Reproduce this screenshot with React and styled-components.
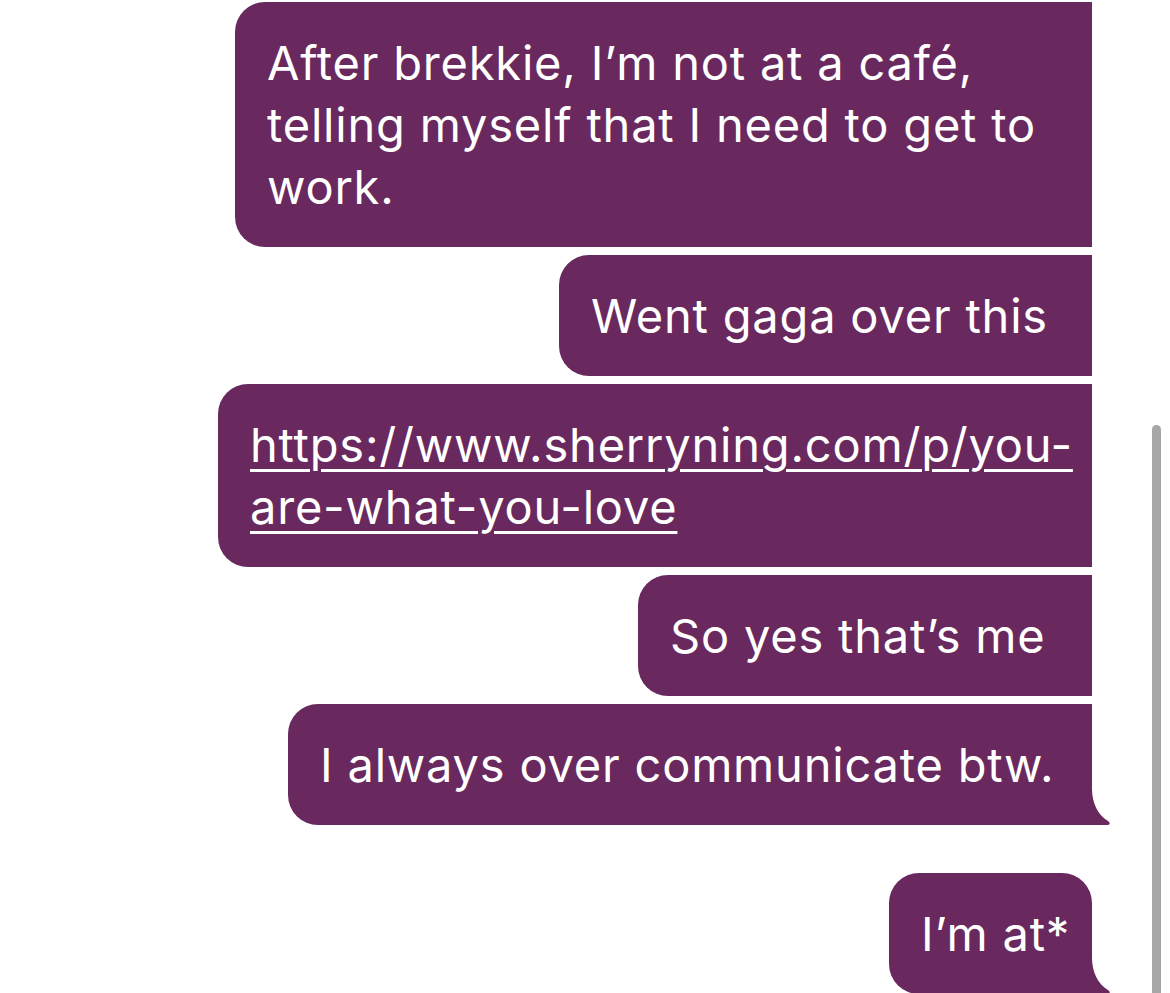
import React from "react";
import styled, { createGlobalStyle } from "styled-components";

const Global = createGlobalStyle`
  html, body { margin: 0; padding: 0; background: #ffffff; overflow: hidden; }
  body { font-family: "Inter", "Lato", "Liberation Sans", sans-serif; }
`;

const Page = styled.div`
  position: relative;
  width: 1170px;
  height: 993px;
  overflow: hidden;
  background: #ffffff;
`;

const Thread = styled.div`
  display: flex;
  flex-direction: column;
  align-items: flex-end;
  padding: 2px 78px 0 0;
`;

const Bubble = styled.div`
  position: relative;
  box-sizing: border-box;
  width: ${(p) => p.$w}px;
  margin-top: ${(p) => p.$gap || 0}px;
  padding: 30px 0 29px 32px;
  background: #69295e;
  color: #ffffff;
  font-size: 47px;
  line-height: 62px;
  letter-spacing: 0.8px;
  white-space: nowrap;
  border-radius: 30px ${(p) => (p.$topRight ? 30 : 0)}px 0 30px;
`;

const Link = styled.a`
  color: #ffffff;
  text-decoration: underline;
  text-decoration-thickness: 3px;
  text-underline-offset: 7px;
`;

const Tail = styled.svg`
  position: absolute;
  right: -20px;
  bottom: 0;
  width: 20px;
  height: 36px;
  display: block;
`;

const Scrollbar = styled.div`
  position: absolute;
  left: 1152px;
  top: 425px;
  width: 9px;
  height: 580px;
  background: #a6a6a6;
  border-radius: 5px 5px 0 0;
`;

const TailShape = () => (
  <Tail viewBox="0 0 20 36">
    <path d="M0 0 C 0 14, 6 26, 16 32 Q 19.5 34.5, 16 36 L 0 36 Z" fill="#69295e" />
  </Tail>
);

export default function App() {
  return (
    <>
      <Global />
      <Page>
        <Thread>
          <Bubble $w={857}>
            After brekkie, I’m not at a café,
            <br />
            telling myself that I need to get to
            <br />
            work.
          </Bubble>
          <Bubble $gap={8} $w={533}>Went gaga over this</Bubble>
          <Bubble $gap={8} $w={874}>
            <Link href="#">
              https://www.sherryning.com/p/you-
              <br />
              are-what-you-love
            </Link>
          </Bubble>
          <Bubble $gap={8} $w={454}>So yes that’s me</Bubble>
          <Bubble $gap={8} $w={804}>
            I always over communicate btw.
            <TailShape />
          </Bubble>
          <Bubble $gap={48} $w={203} $topRight>
            I’m at*
            <TailShape />
          </Bubble>
        </Thread>
        <Scrollbar />
      </Page>
    </>
  );
}
